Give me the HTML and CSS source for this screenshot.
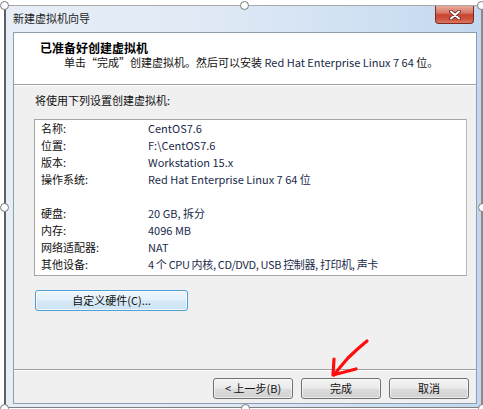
FILE: index.html
```html
<!DOCTYPE html>
<html lang="zh-CN">
<head>
<meta charset="utf-8">
<title>新建虚拟机向导</title>
<link rel="stylesheet" href="styles.css">
</head>
<body>
<div class="win">
  <div class="titlebar">
    <span class="title">新建虚拟机向导</span>
    <div class="close">
      <svg width="14" height="10" viewBox="0 0 14 10">
        <path d="M3 1.5 L11 8.5 M11 1.5 L3 8.5" stroke="#5a2019" stroke-width="3.6" stroke-linecap="round"/>
        <path d="M3 1.5 L11 8.5 M11 1.5 L3 8.5" stroke="#ffffff" stroke-width="2" stroke-linecap="round"/>
      </svg>
    </div>
  </div>
  <div class="client">
    <div class="header">
      <div class="h-title">已准备好创建虚拟机</div>
      <div class="h-sub">单击“完成”创建虚拟机。然后可以安装 <span class="en">Red Hat Enterprise Linux 7 64</span> 位。</div>
    </div>
    <div class="body">
      <div class="intro">将使用下列设置创建虚拟机:</div>
      <div class="list">
        <div class="row"><span class="lbl">名称:</span><span class="val">CentOS7.6</span></div>
        <div class="row"><span class="lbl">位置:</span><span class="val">F:\CentOS7.6</span></div>
        <div class="row"><span class="lbl">版本:</span><span class="val">Workstation 15.x</span></div>
        <div class="row"><span class="lbl">操作系统:</span><span class="val">Red Hat Enterprise Linux 7 64 位</span></div>
        <div class="row"></div>
        <div class="row"><span class="lbl">硬盘:</span><span class="val">20 GB, 拆分</span></div>
        <div class="row"><span class="lbl">内存:</span><span class="val">4096 MB</span></div>
        <div class="row"><span class="lbl">网络适配器:</span><span class="val">NAT</span></div>
        <div class="row"><span class="lbl">其他设备:</span><span class="val tight">4 个 CPU 内核, CD/DVD, USB 控制器, 打印机, 声卡</span></div>
      </div>
      <div class="btn custom">自定义硬件(C)...</div>
    </div>
    <div class="footer">
      <div class="btn">&lt; 上一步(B)</div>
      <div class="btn">完成</div>
      <div class="btn">取消</div>
    </div>
  </div>
</div>

<svg class="arrow" width="483" height="409" viewBox="0 0 483 409">
  <path d="M367 341 Q357 349 348 358 Q340 367 334 375" fill="none" stroke="#ff0d0d" stroke-width="3.2" stroke-linecap="round" stroke-linejoin="round"/>
  <path d="M334 359 L333 375 L356 369" fill="none" stroke="#ff0d0d" stroke-width="3.2" stroke-linecap="round" stroke-linejoin="round"/>
</svg>

<div class="handle h-tl"></div>
<div class="handle h-tm"></div>
<div class="handle h-tr"></div>
<div class="handle h-ml"></div>
<div class="handle h-mr"></div>
<div class="handle h-bl"></div>
<div class="handle h-bm"></div>
<div class="handle h-br"></div>
</body>
</html>
```

FILE: styles.css
```css
* { box-sizing: border-box; }

html, body {
  margin: 0;
  padding: 0;
}

body {
  position: relative;
  width: 483px;
  height: 409px;
  overflow: hidden;
  background: #ffffff;
  font-family: "Noto Sans CJK SC", "Liberation Sans", sans-serif;
  font-size: 11px;
  color: #111111;
}

.win {
  margin: 5px 0 0 4px;
  width: 479px;
  height: 403px;
  border-left: 2px solid #5f5f5f;
  border-top: 1px solid #a8a8a8;
  border-right: 2px solid #8a8a8a;
  border-bottom: 1px solid #7f7f7f;
  padding: 0 4px 3px 7px;
  background: linear-gradient(to right, #e7eef7 0%, #dfe9f5 45%, #cddff2 80%, #c3d8ef 100%);
  display: flex;
  flex-direction: column;
}

.titlebar {
  height: 26px;
  display: flex;
  align-items: flex-start;
}

.title {
  margin-top: 5px;
  line-height: 14px;
  font-size: 11px;
  color: #1c1c1c;
}

.close {
  margin-left: auto;
  margin-right: 3px;
  width: 39px;
  height: 18px;
  border: 1px solid #7d2a20;
  border-top: none;
  border-radius: 0 0 4px 4px;
  background: linear-gradient(#eaa898 0%, #d7796a 40%, #c8442f 52%, #cf5641 80%, #dc7a62 100%);
  display: flex;
  align-items: center;
  justify-content: center;
}

.client {
  flex: 1;
  border: 1px solid #8e9db0;
  display: flex;
  flex-direction: column;
  background: #f0f0f0;
}

.header {
  height: 52px;
  background: #ffffff;
  border-bottom: 1px solid #a0a0a0;
  padding-top: 7px;
}

.h-title {
  padding-left: 26px;
  line-height: 15px;
  font-size: 12px;
  font-weight: bold;
  color: #000000;
}

.h-sub {
  padding-left: 50px;
  line-height: 15px;
  color: #111111;
}

.en, .val {
  color: #1a2a4a;
}

.body {
  height: 284px;
  border-top: 1px solid #ffffff;
  padding: 7px 0 0 20px;
}

.intro {
  padding-left: 1px;
  line-height: 15px;
}

.list {
  margin-top: 11px;
  width: 433px;
  height: 157px;
  border: 1px solid #a6a6a6;
  border-right-color: #b8b8b8;
  background: #ffffff;
  padding: 0 0 0 6px;
}

.row {
  height: 17px;
  line-height: 17px;
  display: flex;
  white-space: nowrap;
}

.lbl {
  width: 107px;
  flex: none;
}

.tight {
  letter-spacing: -0.35px;
}

.btn {
  width: 80px;
  height: 21px;
  border: 1px solid #707070;
  border-radius: 3px;
  background: linear-gradient(#f3f3f3 0%, #ebebeb 48%, #dddddd 52%, #d0d0d0 100%);
  box-shadow: inset 0 0 0 1px rgba(255, 255, 255, 0.6);
  display: flex;
  align-items: center;
  justify-content: center;
  line-height: 15px;
  color: #111111;
}

.custom {
  margin: 14px 0 0 1px;
  width: 153px;
  border-color: #4f9fd3;
  background: linear-gradient(#eef6fc 0%, #e3f0fa 48%, #d6e8f6 52%, #cde3f3 100%);
  box-shadow: inset 0 0 0 1px rgba(255, 255, 255, 0.7);
}

.footer {
  flex: 1;
  border-top: 1px solid #a0a0a0;
  box-shadow: inset 0 1px 0 #ffffff;
  display: flex;
  justify-content: flex-end;
  align-items: flex-start;
  gap: 8px;
  padding: 8px 7px 0 0;
}

.arrow {
  position: absolute;
  left: 0;
  top: 0;
  pointer-events: none;
}

.handle {
  position: absolute;
  width: 9px;
  height: 9px;
  border-radius: 50%;
  border: 1px solid #7a7a7a;
  background: #ffffff;
}

.h-tl { left: 0; top: 1px; }
.h-tm { left: 240px; top: 1px; }
.h-tr { left: 477px; top: 1px; }
.h-ml { left: 0; top: 203px; }
.h-mr { left: 478px; top: 203px; }
.h-bl { left: 0; top: 404px; }
.h-bm { left: 241px; top: 404px; }
.h-br { left: 478px; top: 404px; }
```
